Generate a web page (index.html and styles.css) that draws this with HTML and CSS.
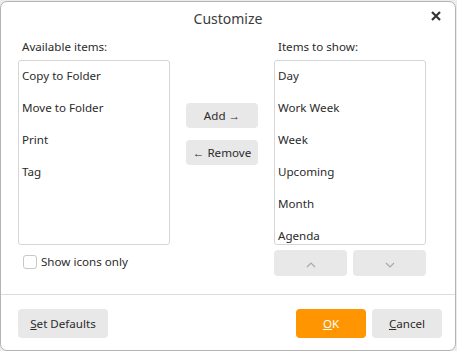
FILE: index.html
```html
<!DOCTYPE html>
<html lang="en">
<head>
    <meta charset="UTF-8">
    <title>Customize</title>
    <link rel="stylesheet" href="styles.css">
</head>
<body>
    <div class="dialog">
        <div class="title-bar">
            <span class="title">Customize</span>
            <svg class="close" width="10" height="10" viewBox="0 0 10 10"><path d="M1 1 L9 9 M9 1 L1 9" stroke="#333" stroke-width="2.2"/></svg>
        </div>

        <div class="main">
            <div class="column">
                <div class="label">Available items:</div>
                <div class="list">
                    <div class="item">Copy to Folder</div>
                    <div class="item">Move to Folder</div>
                    <div class="item">Print</div>
                    <div class="item">Tag</div>
                </div>
                <label class="check">
                    <span class="box"></span>
                    Show icons only
                </label>
            </div>

            <div class="middle">
                <button class="btn">Add &rarr;</button>
                <button class="btn">&larr; Remove</button>
            </div>

            <div class="column">
                <div class="label">Items to show:</div>
                <div class="list">
                    <div class="item">Day</div>
                    <div class="item">Work Week</div>
                    <div class="item">Week</div>
                    <div class="item">Upcoming</div>
                    <div class="item">Month</div>
                    <div class="item">Agenda</div>
                </div>
                <div class="order">
                    <button class="btn arrow">
                        <svg width="10" height="6" viewBox="0 0 10 6"><path d="M1 5 L5 1 L9 5" fill="none" stroke="#a9a9a9" stroke-width="1.2"/></svg>
                    </button>
                    <button class="btn arrow">
                        <svg width="10" height="6" viewBox="0 0 10 6"><path d="M1 1 L5 5 L9 1" fill="none" stroke="#a9a9a9" stroke-width="1.2"/></svg>
                    </button>
                </div>
            </div>
        </div>

        <div class="footer">
            <button class="btn wide"><u>S</u>et Defaults</button>
            <div class="spacer"></div>
            <button class="btn primary"><u>O</u>K</button>
            <button class="btn"><u>C</u>ancel</button>
        </div>
    </div>
</body>
</html>
```

FILE: styles.css
```css
* {
    margin: 0;
    padding: 0;
    box-sizing: border-box;
}

body {
    font-family: "Noto Sans", "Open Sans", sans-serif;
    font-size: 11.6px;
    color: #2b2b2b;
    background: #ececec;
}

.dialog {
    width: 456px;
    height: 350px;
    margin-top: 1px;
    background: white;
    border: 1px solid #b4b4b4;
    border-radius: 7px;
    display: flex;
    flex-direction: column;
}

.title-bar {
    height: 34px;
    position: relative;
    display: flex;
    align-items: center;
    justify-content: center;
}

.title {
    font-size: 14px;
    color: #3c3c3c;
    margin-top: -2px;
}

.close {
    position: absolute;
    right: 14px;
    top: 9px;
}

.main {
    display: flex;
    padding: 2px 0 0 17px;
    height: 259px;
    border-bottom: 1px solid #dcdcdc;
}

.column {
    width: 152px;
    display: flex;
    flex-direction: column;
}

.label {
    padding-left: 4px;
    height: 22px;
    line-height: 18px;
}

.list {
    height: 185px;
    border: 1px solid #d6d6d6;
    border-radius: 3px;
    overflow: hidden;
    padding-top: 4px;
}

.item {
    height: 32px;
    line-height: 22px;
    padding-left: 3px;
}

.check {
    display: flex;
    align-items: center;
    gap: 4px;
    margin: 9px 0 0 5px;
}

.box {
    width: 14px;
    height: 14px;
    border: 1px solid #c8c8c8;
    border-radius: 3px;
}

.middle {
    width: 104px;
    display: flex;
    flex-direction: column;
    align-items: center;
    gap: 12px;
    padding-top: 65px;
}

.middle .btn {
    width: 72px;
    height: 25px;
}

.btn {
    font-family: inherit;
    font-size: 11.6px;
    color: #2b2b2b;
    background: #e8e8e8;
    border: none;
    border-radius: 4px;
    height: 29px;
    width: 70px;
}

.order {
    display: flex;
    gap: 6px;
    margin-top: 5px;
}

.order .btn {
    width: 73px;
    height: 26px;
}

.footer {
    display: flex;
    align-items: center;
    gap: 6px;
    padding: 14px 13px 0 17px;
}

.spacer {
    flex: 1;
}

.wide {
    width: 90px;
}

.primary {
    background: #ff9500;
    color: white;
}
```
